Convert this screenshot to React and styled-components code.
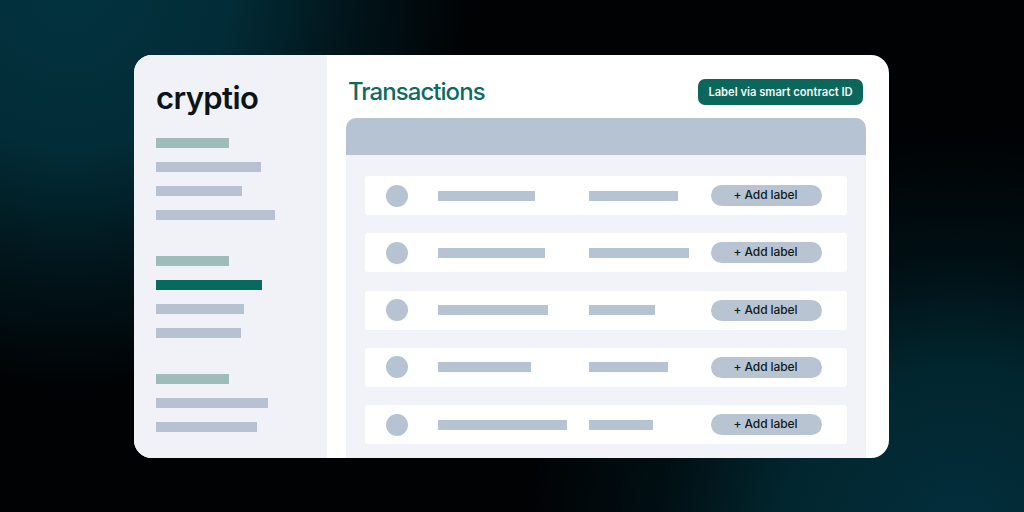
import React from "react";
import styled, { createGlobalStyle } from "styled-components";

const GlobalStyle = createGlobalStyle`
  html, body {
    margin: 0;
    padding: 0;
    background: #000;
  }
`;

const Page = styled.div`
  box-sizing: border-box;
  width: 1024px;
  height: 512px;
  overflow: hidden;
  padding: 55px 135px 54px 134px;
  font-family: Inter, "Liberation Sans", sans-serif;
  background:
    radial-gradient(ellipse 400px 400px at 70px -10px, #02333f 0%, #022c37 40%, rgba(2, 34, 42, 0.7) 65%, rgba(1, 20, 25, 0) 100%),
    radial-gradient(ellipse 440px 400px at 960px 530px, #022e3c 0%, #02262f 40%, rgba(1, 24, 30, 0.6) 68%, rgba(1, 14, 18, 0) 100%),
    #000204;
`;

const Card = styled.div`
  display: flex;
  height: 403px;
  border-radius: 18px;
  overflow: hidden;
  background: #fff;
`;

const Sidebar = styled.aside`
  box-sizing: border-box;
  width: 193px;
  flex: none;
  padding: 24px 22px 0;
  background: #f0f2f7;
`;

const Logo = styled.div`
  height: 39px;
  margin-bottom: 20px;
  font-size: 31px;
  font-weight: 600;
  line-height: 38px;
  letter-spacing: -0.6px;
  color: #0b1419;
`;

const NavGroup = styled.div`
  display: flex;
  flex-direction: column;
  align-items: flex-start;
  gap: 14px;
  margin-bottom: 36px;
`;

const NavBar = styled.div`
  height: 10px;
  width: ${(p) => p.$w}px;
  background: ${(p) => (p.$kind === "head" ? "#9dbcba" : p.$kind === "active" ? "#076a5f" : "#b6c2d1")};
`;

const Main = styled.main`
  flex: 1;
  min-width: 0;
  padding: 24px 23px 0 19px;
`;

const TopRow = styled.div`
  display: flex;
  align-items: center;
  justify-content: space-between;
  height: 26px;
  margin-bottom: 13px;
  padding: 0 3px 0 2px;
`;

const Title = styled.h1`
  margin: -2px 0 0;
  font-size: 24px;
  font-weight: 500;
  letter-spacing: -0.95px;
  color: #0c6b60;
`;

const ActionButton = styled.button`
  height: 26px;
  width: 165px;
  padding: 0;
  border: 0;
  border-radius: 7px;
  background: #0b675c;
  font-family: inherit;
  font-size: 11.2px;
  font-weight: 600;
  color: #f2f7f6;
`;

const TableHead = styled.div`
  height: 37px;
  border-radius: 10px 10px 0 0;
  background: #b5c3d3;
`;

const TableBody = styled.div`
  display: flex;
  flex-direction: column;
  gap: 18.25px;
  height: 303px;
  box-sizing: border-box;
  padding: 21px 19px 0;
  background: #f1f3f8;
`;

const Row = styled.div`
  display: flex;
  align-items: center;
  flex: none;
  height: 39px;
  padding: 0 25px 0 21px;
  border-radius: 3px;
  background: #fff;
`;

const Dot = styled.span`
  flex: none;
  width: 22px;
  height: 22px;
  border-radius: 50%;
  background: #b5c3d3;
`;

const Cell = styled.div`
  flex: none;
  width: ${(p) => p.$w}px;
`;

const CellBar = styled.div`
  height: 10px;
  width: ${(p) => p.$w}px;
  background: #b5c3d3;
`;

const Pill = styled.span`
  flex: none;
  width: 111px;
  height: 21px;
  border-radius: 11px;
  background: #b8c4d2;
  padding-right: 2px;
  box-sizing: border-box;
  text-align: center;
  font-size: 12px;
  font-weight: 500;
  letter-spacing: -0.1px;
  line-height: 20px;
  color: #0f1a22;
`;

const nav = [
  [["head", 73], ["", 105], ["", 86], ["", 119]],
  [["head", 73], ["active", 106], ["", 88], ["", 85]],
  [["head", 73], ["", 112], ["", 101]],
];

const rows = [
  [97, 89],
  [107, 100],
  [110, 66],
  [93, 79],
  [129, 64],
];

export default function App() {
  return (
    <Page>
      <GlobalStyle />
      <Card>
        <Sidebar>
          <Logo>cryptio</Logo>
          {nav.map((group, i) => (
            <NavGroup key={i}>
              {group.map(([kind, w], j) => (
                <NavBar key={j} $kind={kind} $w={w} />
              ))}
            </NavGroup>
          ))}
        </Sidebar>
        <Main>
          <TopRow>
            <Title>Transactions</Title>
            <ActionButton>Label via smart contract ID</ActionButton>
          </TopRow>
          <TableHead />
          <TableBody>
            {rows.map(([a, b], i) => (
              <Row key={i}>
                <Dot />
                <Cell $w={30} />
                <Cell $w={151}>
                  <CellBar $w={a} />
                </Cell>
                <Cell $w={122}>
                  <CellBar $w={b} />
                </Cell>
                <Pill>+ Add label</Pill>
              </Row>
            ))}
          </TableBody>
        </Main>
      </Card>
    </Page>
  );
}
